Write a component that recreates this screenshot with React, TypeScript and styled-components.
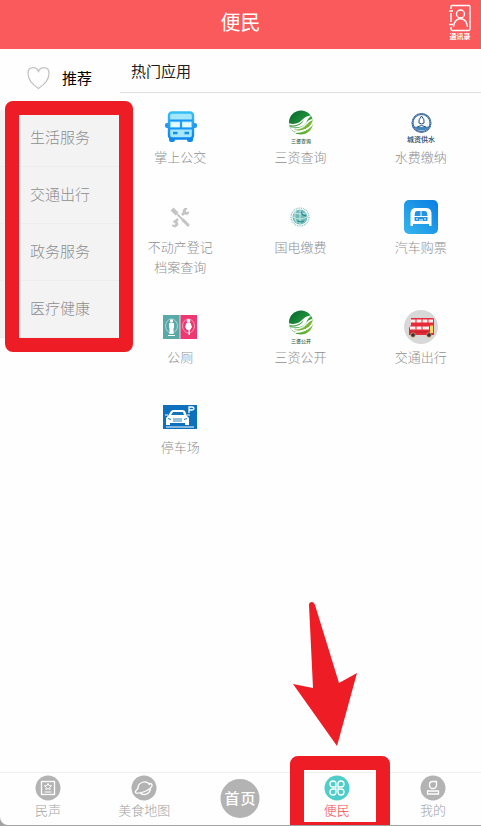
import React from "react";
import styled, { createGlobalStyle } from "styled-components";

const RED = "#ee1c24";
const MARK_FONT = '"Noto Sans CJK SC", sans-serif';

const GlobalStyle = createGlobalStyle`
  * { box-sizing: border-box; }
  body {
    margin: 0;
    background: #a3a3a3;
    font-family: "Noto Sans CJK SC", sans-serif;
    font-weight: 300;
  }
  button {
    margin: 0;
    padding: 0;
    border: 0;
    background: none;
    font: inherit;
    color: inherit;
    cursor: pointer;
  }
  svg { display: block; flex: none; }
`;

const Page = styled.div`
  display: flex;
  flex-direction: column;
  min-height: calc(100vh - 1px);
  margin-bottom: 1px;
  background: #fefefe;
  border-bottom-left-radius: 8px;
  overflow: hidden;
`;

const Header = styled.header`
  display: grid;
  grid-template-columns: 1fr auto 1fr;
  align-items: center;
  height: 49px;
  padding: 0 9px;
  background: #fa5a5c;
  color: #fff;
`;

const Title = styled.h1`
  grid-column: 2;
  margin: 0;
  padding-bottom: 6px;
  font-size: 20px;
  line-height: 28px;
  font-weight: 400;
`;

const ContactsButton = styled.button`
  justify-self: end;
  padding-bottom: 6px;
`;

const Body = styled.div`
  flex: 1;
  display: grid;
  grid-template-columns: 120px 1fr;
  align-items: start;
`;

const Recommended = styled.button`
  display: flex;
  align-items: center;
  gap: 12px;
  width: 100%;
  height: 61px;
  padding: 0 0 4px 26px;
  color: #000;
  font-size: 15px;
  font-weight: 400;
`;

const CategoryList = styled.div`
  position: relative;
  background: #f3f3f3;
  &::after {
    content: "";
    position: absolute;
    top: -9px;
    right: -13px;
    bottom: -14px;
    left: 5px;
    border: 14px solid ${RED};
    border-radius: 8px;
    pointer-events: none;
  }
`;

const Category = styled.button`
  display: block;
  width: 100%;
  height: 57px;
  padding: 0 0 3px 30px;
  border-bottom: 1px solid #ededed;
  text-align: left;
  color: #8e8e8e;
  font-size: 15px;
`;

const SectionTitle = styled.h2`
  height: 44px;
  margin: 0;
  padding-left: 11px;
  border-bottom: 1px solid #dedede;
  font-size: 15px;
  line-height: 43px;
  font-weight: 400;
  color: #1c1c1c;
`;

const AppGrid = styled.div`
  display: grid;
  grid-template-columns: repeat(3, 1fr);
  align-items: start;
`;

const AppButton = styled.button`
  display: flex;
  flex-direction: column;
  align-items: center;
  gap: 3px;
  padding: 17px 24px 16px;
  color: #909090;
  font-size: 13px;
  line-height: 20px;
`;

const TabBar = styled.nav`
  display: grid;
  grid-template-columns: repeat(5, 1fr);
  height: 53px;
  border-top: 1px solid #efefef;
`;

const Tab = styled.button<{ $active?: boolean; $home?: boolean }>`
  position: relative;
  display: flex;
  flex-direction: column;
  align-items: center;
  justify-content: ${(p) => (p.$home ? "center" : "flex-start")};
  padding-top: ${(p) => (p.$home ? 0 : 2)}px;
  color: ${(p) => (p.$active ? "#f4484c" : "#a3a3a3")};
  font-size: 13px;
  line-height: 17px;
`;

const TabMarker = styled.span`
  position: absolute;
  top: -17px;
  left: 50%;
  width: 100px;
  height: 70px;
  transform: translateX(-50%);
  margin-left: 3px;
  border: solid ${RED};
  border-width: 14px 14px 4px;
  border-radius: 8px 8px 0 0;
  pointer-events: none;
`;

const ArrowMarker = styled.svg`
  position: absolute;
  bottom: 79px;
  left: 50%;
  margin-left: -45px;
  pointer-events: none;
`;

const ContactsIcon = () => (
  <svg width="24" height="36" viewBox="0 0 24 36" fill="none" stroke="#fff" strokeWidth="1.4">
    <path d="M3 5V2.500Q3 1.500 4 1.500H21Q22 1.500 22 2.500V25Q22 26.500 20.500 26.500H4.500Q3 26.500 3 25V23M3 9V18M1 7H5M1 20.500H5" />
    <circle cx="12.500" cy="10" r="4" />
    <path d="M5.500 23Q6 15.500 12.500 14.500Q19 15.500 19.500 23" />
    <text x="12" y="35" textAnchor="middle" fill="#fff" stroke="none" fontSize="7" fontWeight="700" fontFamily={MARK_FONT}>通讯录</text>
  </svg>
);

const HeartIcon = () => (
  <svg width="24" height="24" viewBox="0 0 24 24" fill="none" stroke="#c2c2c2" strokeWidth="1.2">
    <path d="M12.500 22.500C8 19.500 2 14 2 7.500C2 4 4 1.700 7 1.700C9.500 1.700 11.500 3 12.500 5.500C13.500 3 15.500 1.700 18 1.700C21 1.700 23 4 23 7.500C23 14 17 19.500 12.500 22.500Z" />
  </svg>
);

const BusIcon = () => (
  <svg width="34" height="34" viewBox="0 0 34 34">
    <defs>
      <linearGradient id="busBlue" x1="0" y1="0" x2="0" y2="1">
        <stop offset="0" stopColor="#35bff5" />
        <stop offset="1" stopColor="#0d86ee" />
      </linearGradient>
    </defs>
    <rect x="2" y="13" width="32" height="5" rx="2" fill="#2795ed" />
    <path d="M6 27H12V30Q12 32 10 32H8Q6 32 6 30ZM24 27H30V30Q30 32 28 32H26Q24 32 24 30Z" fill="#108af0" />
    <rect x="6" y="2.500" width="24" height="26" rx="3" fill="#a5e6fb" stroke="url(#busBlue)" strokeWidth="2.400" />
    <path d="M7 10.500H29M7 18.500H29M18 11V18" stroke="#1696f2" strokeWidth="1.800" />
    <rect x="8" y="12.500" width="8.500" height="4.500" fill="#e7fbff" />
    <rect x="19.500" y="12.500" width="8.500" height="4.500" fill="#e7fbff" />
    <path d="M10 23H14.500M21.500 23H26" stroke="#128ff2" strokeWidth="2.400" />
  </svg>
);

const LeafIcon = ({ id, caption }: { id: string; caption: string }) => (
  <svg width="34" height="34" viewBox="0 0 34 34">
    <defs>
      <linearGradient id={id} x1="0" y1="0" x2="1" y2="1">
        <stop offset="0" stopColor="#00642c" />
        <stop offset="0.500" stopColor="#21903a" />
        <stop offset="1" stopColor="#a3d52a" />
      </linearGradient>
      <clipPath id={`${id}-clip`}><circle cx="18" cy="12.500" r="12" /></clipPath>
    </defs>
    <g clipPath={`url(#${id}-clip)`}>
      <rect x="5" width="26" height="26" fill={`url(#${id})`} />
      <path d="M5 13Q14 16 20 9Q23 6 29 5Q25 8 23 13Q18 19 5 17Z" fill="#fff" />
      <path d="M6 15Q15 17 21 10Q18 17 7 17Z" fill="#4fa046" />
      <path d="M7 18Q17 21 23 14Q26 10 31 9Q28 20 18 21Q11 22 7 18Z" fill="#79b63a" stroke="#fff" strokeWidth="1.400" />
      <path d="M9 22Q21 24 30 14" fill="none" stroke="#fff" strokeWidth="1.400" />
    </g>
    <text x="18" y="33" textAnchor="middle" fontSize="5" fontWeight="500" fill="#28583b" fontFamily={MARK_FONT}>{caption}</text>
  </svg>
);

const WaterIcon = () => (
  <svg width="34" height="34" viewBox="0 0 34 34">
    <circle cx="17.500" cy="13" r="9" fill="#f4fafc" stroke="#315d91" strokeWidth="2" />
    <circle cx="17.500" cy="13" r="9" fill="none" stroke="#b8cedf" strokeWidth=".8" strokeDasharray="1 1" />
    <path d="M10 16Q14 18 17 16Q21 18 25 16Q23 20.500 17.500 20.500Q12 20.500 10 16Z" fill="#4385bd" />
    <path d="M17.500 6Q14 10 15 13Q17.500 15 20 13Q21 10 17.500 6ZM13 17Q17.500 14 22 17" fill="#fff" stroke="#284f78" strokeWidth="1" />
    <text x="17" y="32" textAnchor="middle" fontSize="7" fontWeight="500" fill="#263e64" fontFamily={MARK_FONT}>城资供水</text>
  </svg>
);

const ToolsIcon = () => (
  <svg width="34" height="34" viewBox="0 0 34 34" fill="none" stroke="#c4c4c4">
    <path d="M9 9L14 14" strokeWidth="4" />
    <path d="M14 14L22 22" strokeWidth="1.800" />
    <path d="M20 20L25 25" strokeWidth="3" strokeLinecap="round" />
    <path d="M12 22L15 19M19 15L22 12" strokeWidth="2.600" />
    <path d="M24 8.500A3 3 0 1 0 26 12L23 12.500L22 11ZM10 21.500A3 3 0 1 1 9 25L12 25.500L13 23Z" fill="#c4c4c4" strokeWidth="1" />
  </svg>
);

const GridGlobeIcon = () => (
  <svg width="34" height="34" viewBox="0 0 34 34" fill="none" stroke="#56a5a3">
    <circle cx="17" cy="17" r="9" strokeWidth="1.200" strokeDasharray="1 .8" opacity=".7" />
    <circle cx="17" cy="17" r="7.500" fill="#71bcba" stroke="none" />
    <path d="M10 17Q17 21 24 17M11 13Q17 15 23 13M17 10V24M13 11Q10 17 14 23" stroke="#c6e8e4" strokeWidth="1" />
    <path d="M18 12L20 15L23 16M14 21L18 22L21 21" stroke="#28888d" strokeWidth="1.200" />
  </svg>
);

const CoachIcon = () => (
  <svg width="34" height="34" viewBox="0 0 34 34">
    <defs>
      <linearGradient id="coachBlue" x1="0" y1="1" x2="1" y2="0">
        <stop offset="0" stopColor="#35b6ed" />
        <stop offset="1" stopColor="#0a7ce2" />
      </linearGradient>
    </defs>
    <rect width="34" height="34" rx="5" fill="url(#coachBlue)" />
    <path d="M6.500 26V13Q7 8 12 8H22Q27 8 27.500 13V26H25V24H9V26Z" fill="#fff" />
    <path d="M10.500 16L11 12.500Q11.500 11 13 11H16.500V16ZM17.500 11H21Q22.500 11 23 12.500L23.500 16H17.500ZM10.500 17H23.500V20Q23.500 21 22.500 21H11.500Q10.500 21 10.500 20Z" fill="#2592e3" />
    <path d="M12 19H14M20 19H22M15 20H19" stroke="#fff" strokeWidth="1" />
  </svg>
);

const ToiletIcon = () => (
  <svg width="34" height="34" viewBox="0 0 34 34">
    <rect y="5" width="17" height="24" fill="#58aaa8" />
    <rect x="17" y="5" width="17" height="24" fill="#ef3872" />
    <path d="M17 5V29" stroke="#d7e1e2" strokeWidth="1" />
    <g fill="none" stroke="#fff" strokeWidth=".7" opacity=".7">
      <ellipse cx="8.500" cy="16" rx="6" ry="7" />
      <ellipse cx="25.500" cy="16" rx="6" ry="7" />
    </g>
    <g fill="#fff">
      <circle cx="8.500" cy="11" r="1.700" />
      <path d="M6 13H11V18H10.500V24H6.500V18H6ZM5 25H12V26H5Z" />
      <circle cx="25.500" cy="11" r="1.900" />
      <path d="M23.500 13H27.500L29 17L27 20V25H25.500V20H24L22 17Z" />
    </g>
  </svg>
);

const DoubleDeckerIcon = () => (
  <svg width="34" height="34" viewBox="0 0 34 34">
    <circle cx="17" cy="17" r="17" fill="#d8d8d8" />
    <path d="M7 8H29Q30 8 30 10V25H5V18L7 15Z" fill="#e52b38" />
    <path d="M7 9.500H29V12.500H7ZM6 16.500H25V19.500H6Z" fill="#f9eded" />
    <path d="M12 9V13M18 9V13M24 9V13M12 16V20M18 16V20" stroke="#d83440" strokeWidth="1" />
    <path d="M26 15.500H29V23H26Z" fill="#ffd66a" />
    <path d="M5 22H25" stroke="#b51c2a" strokeWidth="1" />
    <circle cx="9" cy="25" r="2.300" fill="#353238" stroke="#d5a26c" strokeWidth=".8" />
    <circle cx="25" cy="25" r="2.300" fill="#353238" stroke="#d5a26c" strokeWidth=".8" />
  </svg>
);

const ParkingIcon = () => (
  <svg width="34" height="34" viewBox="0 0 34 34">
    <rect y="5" width="34" height="24" fill="#0d70bd" />
    <path d="M26 13V7H29Q31 7 31 8.500Q31 10 29 10H26" fill="none" stroke="#fff" strokeWidth="1.300" />
    <path d="M5 16L8 11Q9 10 11 10H19Q21 10 22 11L24 16Q26 17 26 19V25H22V23H7V25H3V19Q3 17 5 16Z" fill="#fff" />
    <path d="M8 15L10 12H20L21 15Z" fill="#1774b7" />
    <path d="M5 18.500L8 19.500M24 18.500L21 19.500M10 19H19M10 21H19" stroke="#2d81bd" strokeWidth="1.200" />
    <path d="M2 15H5M24 15H27M3 27H31" stroke="#fff" strokeWidth="1" />
  </svg>
);

const TabIcon = ({ color, children }: { color: string; children: React.ReactNode }) => (
  <svg width="26" height="26" viewBox="0 0 26 26" fill="none" stroke="#fff" strokeWidth="1.300">
    <circle cx="13" cy="13" r="12.500" fill={color} stroke="none" />
    {children}
  </svg>
);

const VoiceIcon = () => (
  <TabIcon color="#b3b3b3">
    <rect x="6.500" y="6.500" width="13" height="13" />
    <path d="M13 8.500L14 10.500L16.500 10.700L14.700 12.300L15.200 14.500L13 13.500L10.800 14.500L11.300 12.300L9.500 10.700L12 10.500ZM9.500 17H16.500" strokeWidth="1" />
  </TabIcon>
);

const PlanetIcon = () => (
  <TabIcon color="#b3b3b3">
    <path d="M7 14A6.500 6.500 0 0 1 19 10M19.500 14A6.500 6.500 0 0 1 9 18" />
    <path d="M7 13.500Q3 17 5 18Q8 19 16 15.500Q23 11 20.500 9Q19.500 8 17.500 9" />
  </TabIcon>
);

const CloverIcon = () => (
  <TabIcon color="#4fcdc8">
    <path d="M12 12H9A3 3 0 1 1 12 9ZM14 12V9A3 3 0 1 1 17 12ZM12 14V17A3 3 0 1 1 9 14ZM14 14H17A3 3 0 1 1 14 17Z" />
  </TabIcon>
);

const ProfileIcon = () => (
  <TabIcon color="#b3b3b3">
    <path d="M16.500 6.500H12.500Q9.500 6.500 9.500 10Q9.500 13.500 13 13.500Q16.500 13.500 16.500 10ZM7.500 16H18.500V19H7.500Z" />
  </TabIcon>
);

const HomeIcon = () => (
  <svg width="40" height="40" viewBox="0 0 40 40" role="img" aria-label="首页">
    <circle cx="20" cy="19.500" r="19.500" fill="#b3b3b3" />
    <text x="12" y="25" textAnchor="middle" fontSize="15" fontWeight="500" fill="#fff" fontFamily={MARK_FONT}>首</text>
    <text x="28" y="25" textAnchor="middle" fontSize="15" fontWeight="500" fill="#fff" fontFamily={MARK_FONT}>页</text>
  </svg>
);

const categories = ["生活服务", "交通出行", "政务服务", "医疗健康"];

const apps = [
  { label: "掌上公交", icon: <BusIcon /> },
  { label: "三资查询", icon: <LeafIcon id="leafQuery" caption="三资查询" /> },
  { label: "水费缴纳", icon: <WaterIcon /> },
  { label: "不动产登记档案查询", icon: <ToolsIcon /> },
  { label: "国电缴费", icon: <GridGlobeIcon /> },
  { label: "汽车购票", icon: <CoachIcon /> },
  { label: "公厕", icon: <ToiletIcon /> },
  { label: "三资公开", icon: <LeafIcon id="leafOpen" caption="三资公开" /> },
  { label: "交通出行", icon: <DoubleDeckerIcon /> },
  { label: "停车场", icon: <ParkingIcon /> },
];

export default function App() {
  return (
    <>
      <GlobalStyle />
      <Page>
        <Header>
          <Title>便民</Title>
          <ContactsButton aria-label="通讯录"><ContactsIcon /></ContactsButton>
        </Header>
        <Body>
          <nav>
            <Recommended><HeartIcon />推荐</Recommended>
            <CategoryList>
              {categories.map((name) => <Category key={name}>{name}</Category>)}
            </CategoryList>
          </nav>
          <main>
            <SectionTitle>热门应用</SectionTitle>
            <AppGrid>
              {apps.map((app) => (
                <AppButton key={app.label}>
                  {app.icon}
                  <span>{app.label}</span>
                </AppButton>
              ))}
            </AppGrid>
          </main>
        </Body>
        <TabBar>
          <Tab><VoiceIcon />民声</Tab>
          <Tab><PlanetIcon />美食地图</Tab>
          <Tab $home><HomeIcon /></Tab>
          <Tab $active aria-current="page">
            <CloverIcon />便民
            <TabMarker />
            <ArrowMarker width="66" height="146" viewBox="0 0 66 146" aria-hidden="true">
              <path d="M17 5Q17 2 20 2Q22 2 23 5L47 83L65 73L45 146L1 84L21 88Z" fill={RED} />
            </ArrowMarker>
          </Tab>
          <Tab><ProfileIcon />我的</Tab>
        </TabBar>
      </Page>
    </>
  );
}
